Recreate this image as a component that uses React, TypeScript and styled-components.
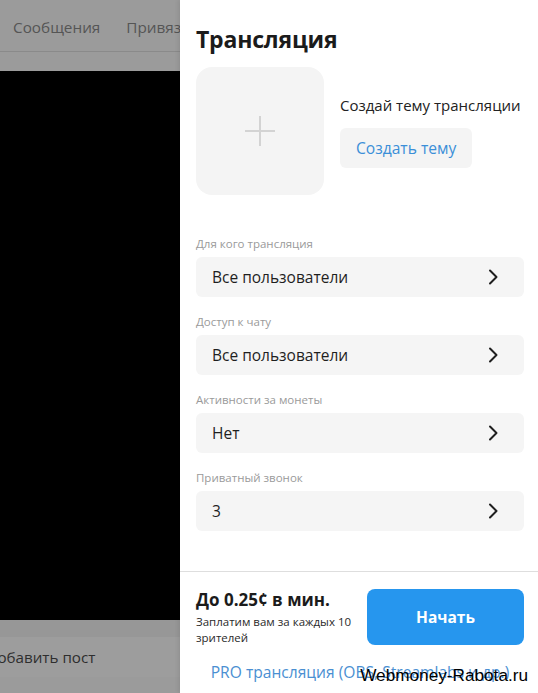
import React from "react";
import styled, { createGlobalStyle } from "styled-components";

const GlobalStyle = createGlobalStyle`
  html, body {
    margin: 0;
    padding: 0;
    width: 538px;
    height: 693px;
    overflow: hidden;
    background: #ffffff;
    font-family: "Open Sans", "Noto Sans", "DejaVu Sans", sans-serif;
  }
  * { box-sizing: border-box; }
`;

const Page = styled.div`
  position: relative;
  display: grid;
  grid-template-columns: 180px 1fr;
  width: 538px;
  height: 693px;
  overflow: hidden;
`;

/* Dimmed page behind the sheet */
const Backdrop = styled.div`
  display: flex;
  flex-direction: column;
  background: #9b9b9b;
  overflow: hidden;
`;

const TopNav = styled.div`
  height: 52px;
  display: flex;
  align-items: center;
  gap: 26px;
  padding: 3px 0 0 13px;
  border-bottom: 1px solid #8a8a8a;
  white-space: nowrap;
`;

const NavItem = styled.span`
  font-size: 15.3px;
  color: #555555;
`;

const Spacer = styled.div`
  height: 19px;
`;

const Video = styled.div`
  height: 549px;
  background: #000000;
`;

const PostBar = styled.div`
  flex: 1;
  display: flex;
  flex-direction: column;
`;

const PostStrip = styled.div`
  height: 17px;
  background: #979797;
`;

const PostField = styled.div`
  height: 40px;
  display: flex;
  align-items: center;
  margin-left: -13px;
  font-size: 15.2px;
  color: #2e2e2e;
  white-space: nowrap;
  background: #9d9d9d;
`;

/* Right-hand sheet */
const Sheet = styled.div`
  display: flex;
  flex-direction: column;
  background: #ffffff;
  box-shadow: -2px 0 4px rgba(0, 0, 0, 0.08);
`;

const SheetBody = styled.div`
  display: flex;
  flex-direction: column;
  padding: 22px 14px 0 16px;
  height: 571px;
`;

const Title = styled.h1`
  margin: 0;
  font-size: 23px;
  line-height: 34px;
  font-weight: 700;
  color: #1b1b1b;
  letter-spacing: -0.2px;
`;

const TopicRow = styled.div`
  display: flex;
  align-items: center;
  gap: 16px;
  margin-top: 11px;
`;

const Cover = styled.div`
  width: 128px;
  height: 128px;
  border-radius: 16px;
  background: #f4f4f4;
  display: flex;
  align-items: center;
  justify-content: center;
  flex-shrink: 0;
`;

const TopicInfo = styled.div`
  display: flex;
  flex-direction: column;
  align-items: flex-start;
  gap: 13px;
`;

const TopicHint = styled.span`
  font-size: 15px;
  color: #222222;
  white-space: nowrap;
`;

const SoftButton = styled.button`
  height: 40px;
  padding: 0 16px;
  border: none;
  border-radius: 6px;
  background: #f4f4f4;
  color: #3b8fd8;
  font-family: inherit;
  font-size: 15.6px;
  font-weight: 500;
  cursor: pointer;
`;

const Fields = styled.div`
  display: flex;
  flex-direction: column;
  gap: 17px;
  margin-top: 41px;
`;

const Field = styled.div`
  display: flex;
  flex-direction: column;
  gap: 5px;
`;

const FieldLabel = styled.span`
  font-size: 11.5px;
  line-height: 16px;
  color: #9a9a9a;
`;

const Select = styled.div`
  height: 40px;
  display: flex;
  align-items: center;
  justify-content: space-between;
  padding: 0 26px 0 16px;
  border-radius: 6px;
  background: #f5f5f5;
  font-size: 15.5px;
  color: #1f1f1f;
  cursor: pointer;
`;

const Footer = styled.div`
  flex: 1;
  border-top: 1px solid #dedede;
  display: flex;
  flex-direction: column;
  padding: 16px 14px 0 16px;
`;

const PayRow = styled.div`
  display: flex;
  align-items: center;
  justify-content: space-between;
`;

const Pay = styled.div`
  display: flex;
  flex-direction: column;
  width: 160px;
`;

const Rate = styled.span`
  font-size: 17px;
  line-height: 24px;
  font-weight: 700;
  color: #1b1b1b;
`;

const RateNote = styled.span`
  font-size: 11.5px;
  line-height: 16px;
  margin-top: 2px;
  color: #2a2a2a;
`;

const PrimaryButton = styled.button`
  width: 157px;
  height: 56px;
  border: none;
  border-radius: 8px;
  background: #2696ee;
  color: #ffffff;
  font-family: inherit;
  font-size: 15.5px;
  font-weight: 700;
  cursor: pointer;
`;

const ProLink = styled.a`
  align-self: center;
  margin-top: 15px;
  font-size: 15.6px;
  color: #4a8fd2;
  text-decoration: none;
  white-space: nowrap;
`;

const Watermark = styled.span`
  position: absolute;
  right: 10px;
  bottom: 7px;
  font-family: "Liberation Sans", Arial, sans-serif;
  font-size: 17.2px;
  color: #000000;
  white-space: nowrap;
`;

const PlusIcon = () => (
  <svg width="32" height="32" viewBox="0 0 32 32" fill="none">
    <path d="M16 1v30M1 16h30" stroke="#d3d3d3" strokeWidth="2" />
  </svg>
);

const Chevron = () => (
  <svg width="10" height="16" viewBox="0 0 10 16" fill="none">
    <path
      d="M2 1.5 8.5 8 2 14.5"
      stroke="#1f1f1f"
      strokeWidth="2"
      strokeLinecap="round"
      strokeLinejoin="round"
    />
  </svg>
);

const settings = [
  { label: "Для кого трансляция", value: "Все пользователи" },
  { label: "Доступ к чату", value: "Все пользователи" },
  { label: "Активности за монеты", value: "Нет" },
  { label: "Приватный звонок", value: "3" },
];

export default function App() {
  return (
    <>
      <GlobalStyle />
      <Page>
        <Backdrop>
          <TopNav>
            <NavItem>Сообщения</NavItem>
            <NavItem>Привязки</NavItem>
          </TopNav>
          <Spacer />
          <Video />
          <PostBar>
            <PostStrip />
            <PostField>Добавить пост</PostField>
          </PostBar>
        </Backdrop>
        <Sheet>
          <SheetBody>
            <Title>Трансляция</Title>
            <TopicRow>
              <Cover>
                <PlusIcon />
              </Cover>
              <TopicInfo>
                <TopicHint>Создай тему трансляции</TopicHint>
                <SoftButton>Создать тему</SoftButton>
              </TopicInfo>
            </TopicRow>
            <Fields>
              {settings.map((s) => (
                <Field key={s.label}>
                  <FieldLabel>{s.label}</FieldLabel>
                  <Select>
                    <span>{s.value}</span>
                    <Chevron />
                  </Select>
                </Field>
              ))}
            </Fields>
          </SheetBody>
          <Footer>
            <PayRow>
              <Pay>
                <Rate>До 0.25¢ в мин.</Rate>
                <RateNote>Заплатим вам за каждых 10 зрителей</RateNote>
              </Pay>
              <PrimaryButton>Начать</PrimaryButton>
            </PayRow>
            <ProLink href="#">PRO трансляция (OBS, Streamlabs и др.)</ProLink>
          </Footer>
        </Sheet>
        <Watermark>Webmoney-Rabota.ru</Watermark>
      </Page>
    </>
  );
}
